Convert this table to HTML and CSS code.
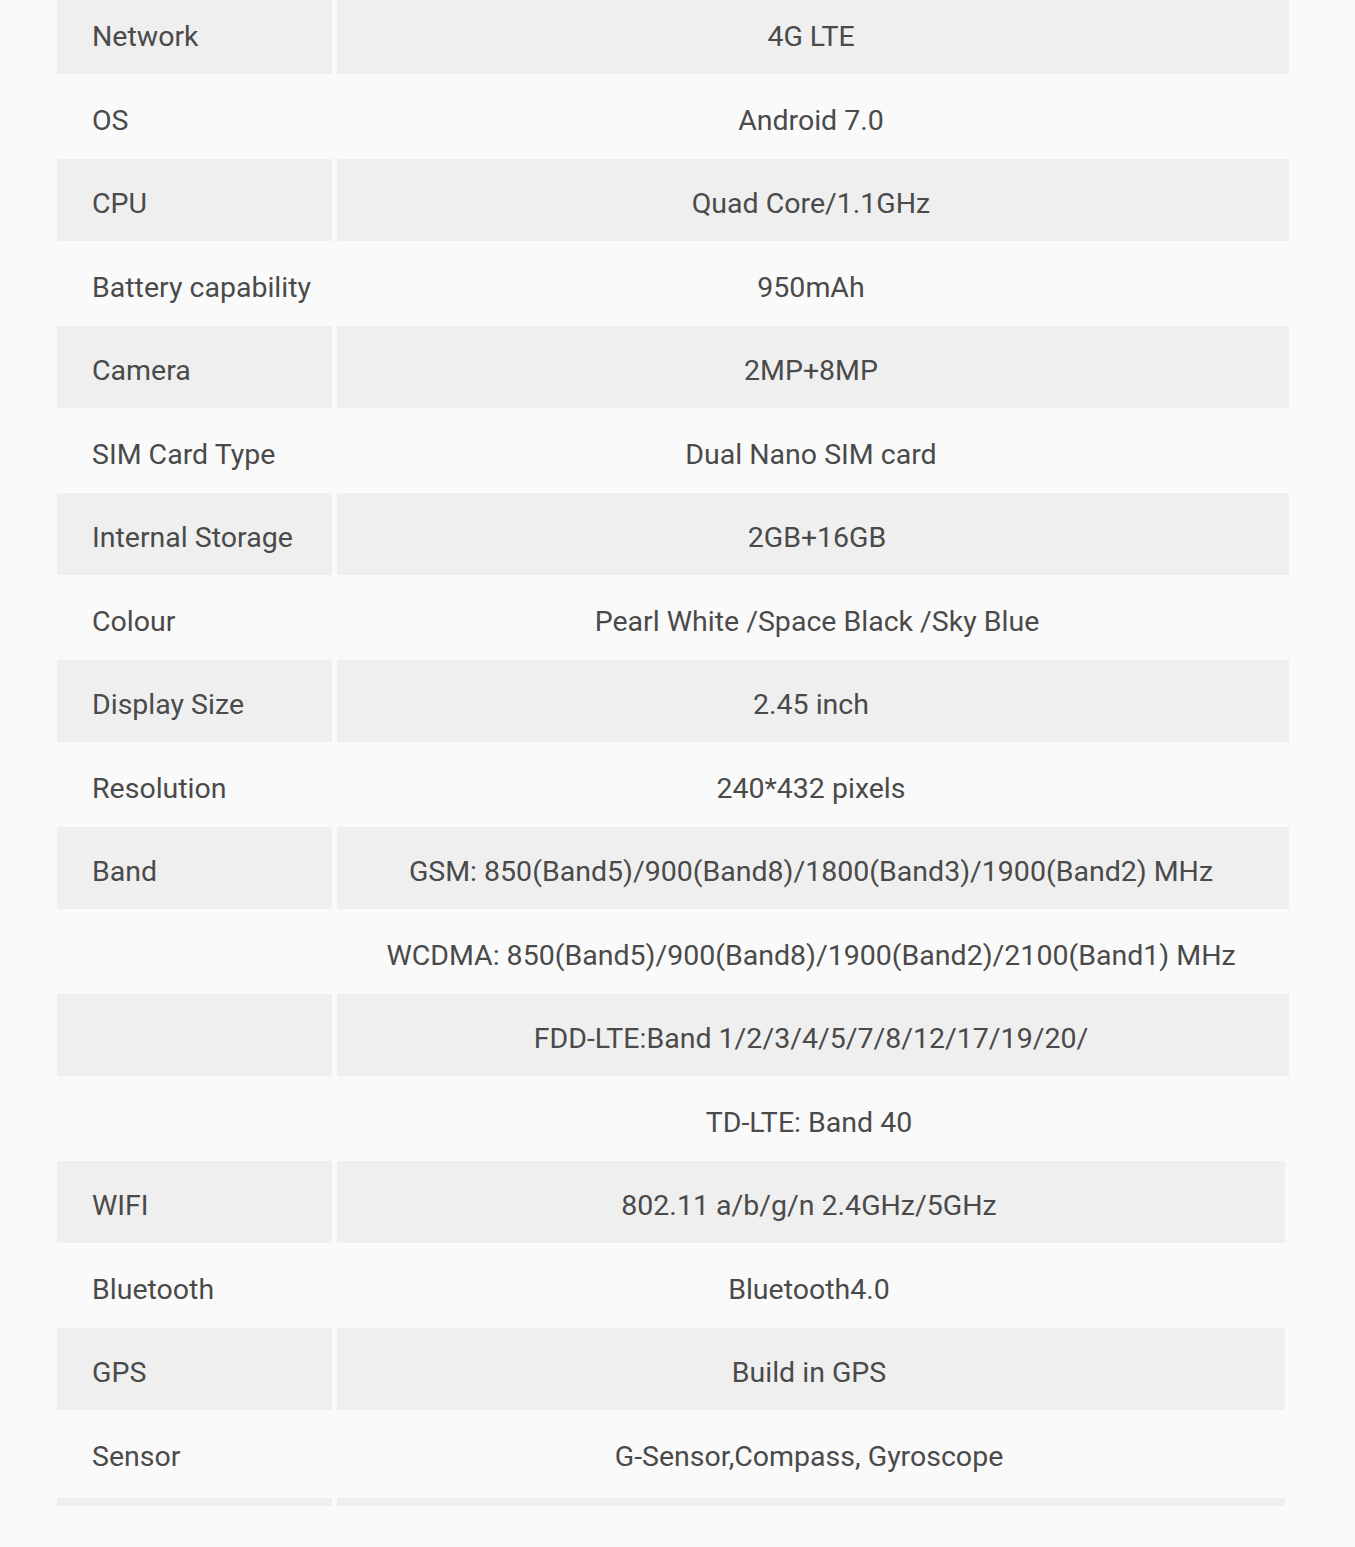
FILE: index.html
```html
<!DOCTYPE html>
<html>
<head>
<meta charset="utf-8">
<link rel="stylesheet" href="styles.css">
</head>
<body>
<div class="specs">
  <div class="row gray"><div class="key">Network</div><div class="val">4G LTE</div></div>
  <div class="row"><div class="key">OS</div><div class="val">Android 7.0</div></div>
  <div class="row gray"><div class="key">CPU</div><div class="val">Quad Core/1.1GHz</div></div>
  <div class="row"><div class="key">Battery capability</div><div class="val">950mAh</div></div>
  <div class="row gray"><div class="key">Camera</div><div class="val">2MP+8MP</div></div>
  <div class="row"><div class="key">SIM Card Type</div><div class="val">Dual Nano SIM card</div></div>
  <div class="row gray"><div class="key">Internal Storage</div><div class="val shift">2GB+16GB</div></div>
  <div class="row"><div class="key">Colour</div><div class="val shift">Pearl White /Space Black /Sky Blue</div></div>
  <div class="row gray"><div class="key">Display Size</div><div class="val">2.45 inch</div></div>
  <div class="row"><div class="key">Resolution</div><div class="val">240*432 pixels</div></div>
  <div class="row gray"><div class="key">Band</div><div class="val">GSM: 850(Band5)/900(Band8)/1800(Band3)/1900(Band2) MHz</div></div>
  <div class="row"><div class="key"></div><div class="val">WCDMA: 850(Band5)/900(Band8)/1900(Band2)/2100(Band1) MHz</div></div>
  <div class="row gray"><div class="key"></div><div class="val">FDD-LTE:Band 1/2/3/4/5/7/8/12/17/19/20/</div></div>
  <div class="row narrow"><div class="key"></div><div class="val">TD-LTE: Band 40</div></div>
  <div class="row gray narrow"><div class="key">WIFI</div><div class="val">802.11 a/b/g/n 2.4GHz/5GHz</div></div>
  <div class="row narrow"><div class="key">Bluetooth</div><div class="val">Bluetooth4.0</div></div>
  <div class="row gray narrow"><div class="key">GPS</div><div class="val">Build in GPS</div></div>
  <div class="row narrow"><div class="key">Sensor</div><div class="val">G-Sensor,Compass, Gyroscope</div></div>
  <div class="row gray narrow tail"><div class="key"></div><div class="val"></div></div>
</div>
</body>
</html>
```

FILE: styles.css
```css
html, body {
  margin: 0;
  padding: 0;
  background: #fafafa;
}

body {
  font-family: Roboto, "Liberation Sans", sans-serif;
  color: #4a4a4a;
  height: 1547px;
  overflow: hidden;
}

.specs {
  margin: -8px 66px 0 57px;
  display: flex;
  flex-direction: column;
}

.row {
  display: grid;
  grid-template-columns: 275px 1fr;
  column-gap: 5px;
  height: 85px;
  font-size: 28.5px;
}

.row.gray {
  height: 82px;
}

.row.narrow {
  margin-right: 4px;
}

.row.gray .key,
.row.gray .val {
  background: #efefef;
}

.key {
  display: flex;
  align-items: center;
  padding-left: 35px;
  padding-top: 7px;
  white-space: nowrap;
}

.val {
  display: flex;
  align-items: center;
  justify-content: center;
  padding-top: 7px;
  padding-right: 4px;
  white-space: nowrap;
}

.val.shift {
  padding-right: 0;
  padding-left: 8px;
}

.row.tail {
  height: 8px;
  margin-top: 3px;
}
```
